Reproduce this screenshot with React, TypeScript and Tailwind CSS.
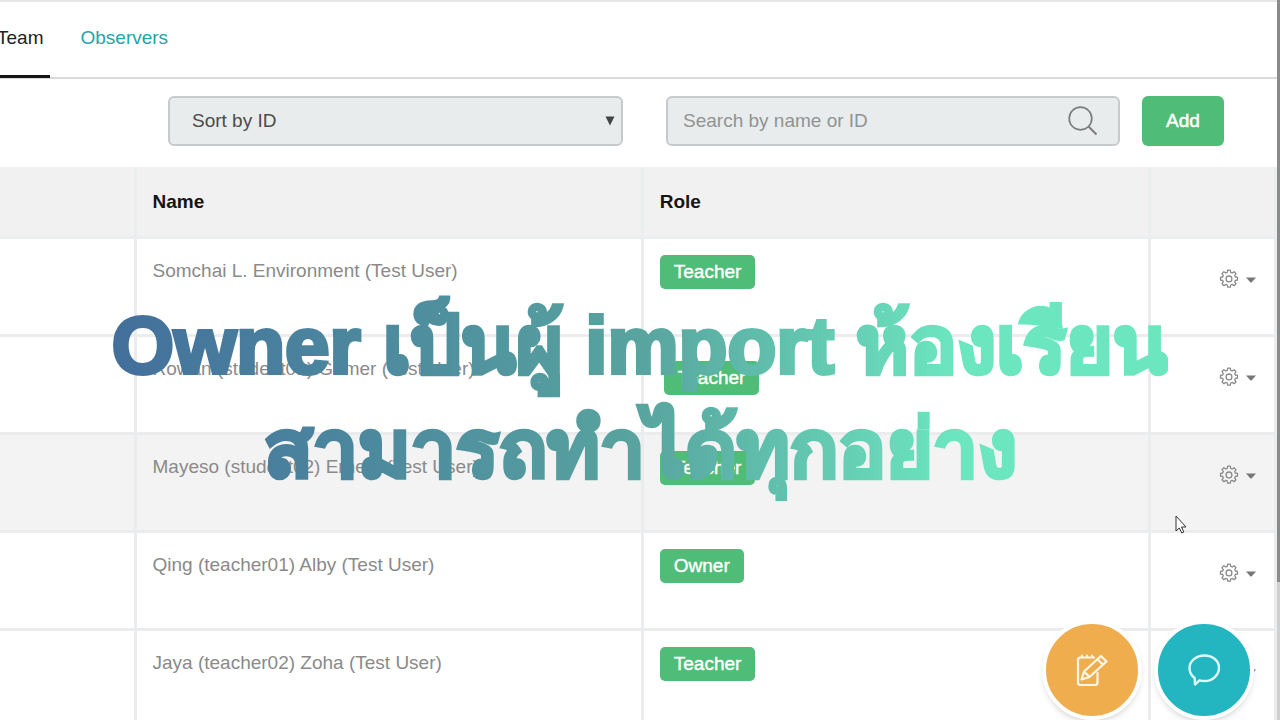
import React from "react";

type Member = {
  name: string;
  role: string;
  highlighted?: boolean;
  dragging?: boolean;
};

const members: Member[] = [
  { name: "Somchai L. Environment (Test User)", role: "Teacher" },
  { name: "Rowan (student01) Gomer (Test User)", role: "Teacher", dragging: true },
  { name: "Mayeso (student02) Ernest (Test User)", role: "Teacher", highlighted: true },
  { name: "Qing (teacher01) Alby (Test User)", role: "Owner" },
  { name: "Jaya (teacher02) Zoha (Test User)", role: "Teacher" },
];

function GearIcon() {
  return (
    <svg width="20" height="20" viewBox="0 0 20 20" fill="none" stroke="#8a8a8a" strokeWidth="1.3" strokeLinejoin="round" aria-hidden="true">
      <path d="M8.7 1.2h2.6l.4 2.2 1.5.6 1.9-1.3 1.9 1.9-1.3 1.9.6 1.5 2.2.4v2.6l-2.2.4-.6 1.5 1.3 1.9-1.9 1.9-1.9-1.3-1.5.6-.4 2.2H8.7l-.4-2.2-1.5-.6-1.9 1.3L3 14.8l1.3-1.9-.6-1.5-2.2-.4V8.4l2.2-.4.6-1.5L3 4.600l1.900-1.900L6.800 4l1.500-.6z" />
      <circle cx="10" cy="9.900" r="2.900" />
    </svg>
  );
}

function Toolbar() {
  return (
    <div className="flex h-[88px] items-start pl-42 pr-[53px] pt-[17px]">
      <div className="grid h-[50px] flex-1 grid-cols-[455px_minmax(0,1fr)] gap-[43px]">
        <div className="relative">
          <select
            aria-label="Sort members"
            className="h-full w-full appearance-none rounded-md border-2 border-[#c6cacc] bg-[#e9ecec] pl-[22px] text-[19px] text-[#4b4b4b]"
          >
            <option>Sort by ID</option>
            <option>Sort by name</option>
          </select>
          <svg className="pointer-events-none absolute right-2 top-5" width="10" height="10" viewBox="0 0 10 10" aria-hidden="true">
            <path d="M.5.500h9L5 9.500z" fill="#444" />
          </svg>
        </div>
        <label className="flex items-center rounded-md border-2 border-[#c6cacc] bg-[#e9ecec] pl-[15px] pr-5">
          <input
            type="text"
            aria-label="Search by name or ID"
            placeholder="Search by name or ID"
            className="min-w-0 flex-1 bg-transparent text-[19px] outline-none placeholder:text-[#909394]"
          />
          <svg width="30" height="30" viewBox="0 0 30 30" fill="none" stroke="#7d7d7d" strokeWidth="1.700" aria-hidden="true">
            <circle cx="12.500" cy="12.500" r="11.300" />
            <path d="M20.500 20.500l8 8" strokeWidth="2" />
          </svg>
        </label>
      </div>
      <button type="button" className="ml-[22px] h-[50px] w-[82px] rounded-md bg-[#4fbc77] text-[19px] text-white [-webkit-text-stroke:0.5px_white]">
        Add
      </button>
    </div>
  );
}

function MembersTable() {
  return (
    <table className="w-full table-fixed border-collapse text-left">
      <thead>
        <tr className="h-[70px] bg-[#f1f1f1]">
          <th aria-label="Member" className="w-[135px] border-b-3 border-r-3 border-[#ebeeef]" />
          <th className="border-b-3 border-r-3 border-[#ebeeef] px-4 pt-0.5 font-bold text-[#151515]">Name</th>
          <th className="border-b-3 border-r-3 border-[#ebeeef] px-4 pt-0.5 font-bold text-[#151515]">Role</th>
          <th aria-label="Actions" className="w-[126px] border-b-3 border-r-3 border-[#ebeeef]" />
        </tr>
      </thead>
      <tbody>
        {members.map((m) => (
          <tr key={m.name} className={m.highlighted ? "h-[98px] bg-[#f3f3f3]" : "h-[98px] bg-white"}>
            <td className="border-b-3 border-r-3 border-[#ebeced]" />
            <td className="border-b-3 border-r-3 border-[#ebeced] px-4 pt-5 align-top leading-6 text-[#8a8a8a]">{m.name}</td>
            <td className={m.dragging ? "border-b-3 border-r-3 border-[#ebeced] px-5 pt-6 align-top" : "border-b-3 border-r-3 border-[#ebeced] px-4 pt-4 align-top"}>
              <span className="inline-flex h-[34px] items-center rounded-[5px] bg-[#4fbc77] px-3.5 pt-0.5 align-top text-white [-webkit-text-stroke:0.4px_white]">
                {m.role}
              </span>
            </td>
            <td className="border-b-3 border-r-3 border-[#ebeced] pr-[18px] pt-[30px] align-top">
              <button type="button" aria-label={`Settings for ${m.name}`} className="ml-auto flex items-center gap-[7px]">
                <GearIcon />
                <svg width="10" height="8" viewBox="0 0 10 8" aria-hidden="true"><path d="M0 2.500h10L5.500 7.500h-1z" fill="#777" /></svg>
              </button>
            </td>
          </tr>
        ))}
      </tbody>
    </table>
  );
}

export default function App() {
  return (
    <div className="relative flex h-screen overflow-hidden bg-white font-['Liberation_Sans',Arial,sans-serif] text-[19px]">
      <main className="min-w-0 flex-1 border-t-2 border-[#e5e5e5]">
        <nav className="flex h-[77px] gap-[30px] border-b-2 border-[#dadada]">
          <a href="#team" className="-ml-[3px] h-[76px] border-b-3 border-[#151515] pr-[7px] pt-6 leading-6 text-[#222]">Team</a>
          <a href="#observers" className="pt-6 leading-6 text-[#23a5a9]">Observers</a>
        </nav>
        <Toolbar />
        <MembersTable />
      </main>
      <div className="w-[3px] bg-[#d0d0d0]"><div className="h-[582px] bg-[#8b8b8b]" /></div>

      <div className="pointer-events-none absolute inset-x-0 top-[286px] flex justify-center">
        <p className="whitespace-nowrap bg-linear-to-r from-[#436f9b] via-[#58a49f] to-[#6ce6bf] to-80% bg-clip-text py-2 text-center text-[80px] font-bold leading-[104px] text-transparent [-webkit-text-stroke:4px_transparent]">
          Owner เป็นผู้ import ห้องเรียน
          <br />
          สามารถทำได้ทุกอย่าง
        </p>
      </div>

      <div className="absolute bottom-0 right-[26px] flex gap-3">
        <button type="button" aria-label="Notes" className="box-content flex size-[92px] items-center justify-center rounded-full border-4 border-white bg-[#efad4e] shadow-md">
          <svg width="32" height="34" viewBox="0 0 32 34" fill="none" stroke="#fff8e8" strokeWidth="2.200" strokeLinejoin="round" strokeLinecap="round" aria-hidden="true">
            <path d="M18 4.500H4.500Q2 4.500 2 7v22.500Q2 32 4.500 32H19q2.500 0 2.500-2.500V20M6 4.500V2.500m5 2V2.500m5 2V2.500" />
            <path d="M5.500 26.500L8 18.500 25 3l5.500 5.500L13.500 24z M8 18.500l5.500 5.500M21.500 6.200l5.500 5.500" />
          </svg>
        </button>
        <button type="button" aria-label="Chat" className="box-content flex size-[92px] items-center justify-center rounded-full border-4 border-white bg-[#23b5c0] shadow-md">
          <svg width="34" height="34" viewBox="0 0 34 34" fill="none" stroke="#dffcff" strokeWidth="2.400" strokeLinejoin="round" aria-hidden="true">
            <path d="M17.500 2.500c8.300 0 14.500 5.300 14.500 12.300S25.800 28 17.500 28c-2 0-3.500-.2-5-.7L8 31.500l-.3-6.500C4 22.500 2.500 19 2.500 15 2.500 8 9.200 2.500 17.500 2.500z" />
          </svg>
        </button>
      </div>

      <svg className="pointer-events-none absolute left-[1175px] top-[515px]" width="12" height="19" viewBox="0 0 12 19" aria-hidden="true">
        <path d="M1 1v15l3.300-3 2.500 5 2-1-2.300-5H11z" fill="white" stroke="#333" strokeWidth="1" />
      </svg>
    </div>
  );
}
